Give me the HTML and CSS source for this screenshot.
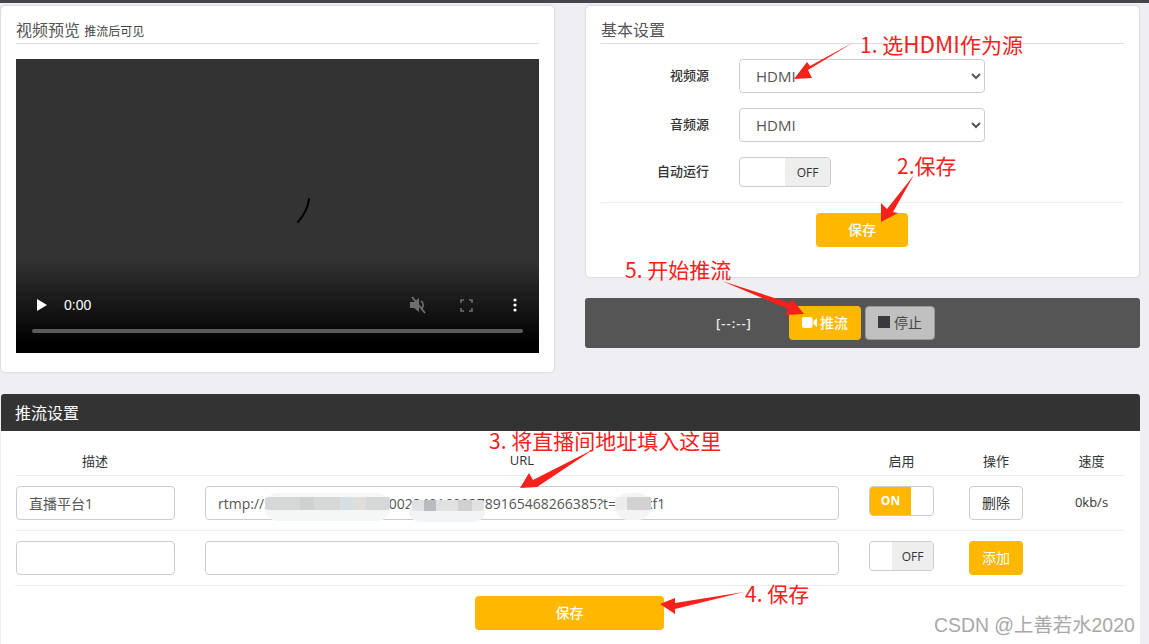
FILE: index.html
```html
<!DOCTYPE html>
<html lang="en">
  <head>
    <meta charset="UTF-8" />
    <meta name="viewport" content="width=device-width, initial-scale=1.0" />
    <title>推流设置</title>
    <link rel="stylesheet" href="styles.css">
  </head>
  <body>
    <div class="topbar"></div>

    <div class="columns">
      <section class="card preview">
        <h3 class="title">视频预览 <small>推流后可见</small></h3>
        <div class="video">
          <svg class="spinner" width="20" height="28" viewBox="0 0 20 28">
            <path d="M15 3 C14 12 10 19 4 26" fill="none" stroke="#000" stroke-width="2" stroke-linecap="round" />
          </svg>
          <div class="controls">
            <svg class="play" width="12" height="14" viewBox="0 0 12 14"><path d="M1 1 L11 7 L1 13 Z" fill="#fff" /></svg>
            <span class="time">0:00</span>
            <svg class="ctl-mute" width="18" height="18" viewBox="0 0 18 18">
              <path d="M1 6 H5 L10 2 V16 L5 12 H1 Z" fill="#6f6f6f" />
              <path d="M12 5 C15 7 15 11 12 13" fill="none" stroke="#6f6f6f" stroke-width="1.6" />
              <path d="M3 1 L16 17" stroke="#6f6f6f" stroke-width="1.8" />
            </svg>
            <svg class="ctl-full" width="13" height="13" viewBox="0 0 13 13">
              <path d="M1 4 V1 H4 M9 1 H12 V4 M12 9 V12 H9 M4 12 H1 V9" fill="none" stroke="#6f6f6f" stroke-width="1.6" />
            </svg>
            <svg class="ctl-more" width="4" height="14" viewBox="0 0 4 14">
              <circle cx="2" cy="2" r="1.6" fill="#fff" />
              <circle cx="2" cy="7" r="1.6" fill="#fff" />
              <circle cx="2" cy="12" r="1.6" fill="#fff" />
            </svg>
          </div>
          <div class="progress"></div>
        </div>
      </section>

      <div class="side">
        <section class="card basic">
          <h3 class="title">基本设置</h3>
          <div class="form-row">
            <label class="form-label">视频源</label>
            <select class="select"><option>HDMI</option></select>
          </div>
          <div class="form-row">
            <label class="form-label">音频源</label>
            <select class="select"><option>HDMI</option></select>
          </div>
          <div class="form-row form-row-switch">
            <label class="form-label">自动运行</label>
            <div class="switch switch-wide"><span class="switch-blank"></span><span class="switch-off">OFF</span></div>
          </div>
          <div class="form-actions">
            <button class="btn btn-save">保存</button>
          </div>
        </section>

        <div class="stream-bar">
          <span class="stream-time">[--:--]</span>
          <button class="btn btn-push">
            <svg width="15" height="11" viewBox="0 0 15 11"><rect x="0" y="0" width="10.5" height="11" rx="2" fill="#fff" /><path d="M11.5 4 L15 1 V10 L11.5 7 Z" fill="#fff" /></svg>
            推流
          </button>
          <button class="btn btn-stop"><i class="stop-icon"></i>停止</button>
        </div>
      </div>
    </div>

    <section class="panel">
      <h3 class="panel-head">推流设置</h3>
      <div class="panel-body">
        <div class="grid-row grid-head">
          <div class="cell-desc">描述</div>
          <div class="cell-url">URL</div>
          <div class="cell-on">启用</div>
          <div class="cell-op">操作</div>
          <div class="cell-speed">速度</div>
        </div>
        <div class="grid-row">
          <input class="input input-desc" type="text" value="直播平台1" />
          <input class="input input-url" type="text" value="rtmp://xxxxxxxxxxxxxxxxx00224916003789165468266385?t=xxxxxf1" />
          <div class="switch switch-on"><span class="switch-label">ON</span><span class="switch-blank"></span></div>
          <button class="btn btn-plain">删除</button>
          <div class="cell-speed cell-value">0kb/s</div>
        </div>
        <div class="grid-row">
          <input class="input input-desc" type="text" />
          <input class="input input-url" type="text" />
          <div class="switch switch-small"><span class="switch-blank"></span><span class="switch-off">OFF</span></div>
          <button class="btn btn-add">添加</button>
          <div class="cell-speed"></div>
        </div>
        <div class="panel-actions">
          <button class="btn btn-save-all">保存</button>
        </div>
      </div>
    </section>

    <!-- screenshot annotations on top of the page -->
    <svg class="notes" width="1149" height="644" viewBox="0 0 1149 644">
      <g class="smudge">
        <rect x="265" y="493" width="125" height="28" rx="13" fill="#f5f6f6" />
        <rect x="265" y="497" width="125" height="13" rx="3" fill="#d6d8d8" />
        <rect x="300" y="497" width="14" height="13" fill="#cfd1d0" />
        <rect x="340" y="497" width="14" height="13" fill="#d8dfe2" />
        <rect x="354" y="497" width="12" height="13" fill="#e0dedb" />
        <rect x="409" y="500" width="76" height="22" rx="11" fill="#f3f4f5" />
        <rect x="412" y="500" width="72" height="11" rx="3" fill="#dfe1e2" />
        <rect x="424" y="500" width="12" height="11" fill="#b9bcbf" />
        <rect x="458" y="500" width="14" height="11" fill="#d0d0d0" />
        <rect x="615" y="493" width="36" height="27" rx="13" fill="#f4f4f4" />
        <rect x="615" y="497" width="12" height="13" rx="3" fill="#ececec" />
        <rect x="627" y="497" width="24" height="13" fill="#d2d2d2" />
      </g>
      <g fill="#f5211a">
        <path d="M854 42 L808 70 L812 78 L794 79 L807 62 L810 66 Z" />
        <path d="M914 175 L893 212 L898 213 L881 222 L881 203 L887 209 Z" />
        <path d="M722 281 L790 303 L792 299 L804 314 L786 315 L788 309 Z" />
        <path d="M594 449 L537 487 L520 488 L529 473 L533 480 Z" />
        <path d="M744 592 L675 609 L675 614 L660 604 L675 598 L675 603 Z" />
      </g>
      <g class="note-text">
        <text x="860" y="53">1. 选<tspan class="note-latin">HDMI</tspan>作为源</text>
        <text x="897" y="174">2.保存</text>
        <text x="625" y="278">5. 开始推流</text>
        <text x="489" y="449">3. 将直播间地址填入这里</text>
        <text x="745" y="602">4. 保存</text>
      </g>
      <text class="watermark" x="934" y="632">CSDN @上善若水2020</text>
    </svg>
  </body>
</html>
```

FILE: styles.css
```css
* {
  box-sizing: border-box;
}
body {
  font-family: "Open Sans", "Noto Sans CJK SC", sans-serif;
  font-size: 13px;
  color: #333;
  background: #eeeef3;
  margin: 0;
  width: 1149px;
  height: 644px;
  overflow: hidden;
  position: relative;
}
.topbar {
  height: 3px;
  background: #45454b;
}
.columns {
  display: flex;
  align-items: flex-start;
  padding: 3px 9px 0 1px;
  gap: 31px;
}
.card {
  background: #fff;
  border-radius: 4px;
  box-shadow: 0 0 2px rgba(0, 0, 0, 0.25);
  padding: 15px;
}
.preview {
  width: 553px;
  height: 366px;
}
.side {
  width: 555px;
}
.basic {
  width: 553px;
  height: 271px;
  margin-left: 1px;
}
.title {
  margin: 0 0 15px;
  height: 23px;
  line-height: 19px;
  font-size: 16px;
  font-weight: 400;
  color: #555;
  border-bottom: 1px solid #ddd;
}
.title small {
  font-size: 12px;
  color: #444;
}
.video {
  position: relative;
  height: 294px;
  display: flex;
  flex-direction: column;
  justify-content: flex-end;
  background: linear-gradient(#333 0, #333 200px, #000 285px);
}
.spinner {
  position: absolute;
  left: 278px;
  top: 137px;
}
.controls {
  display: flex;
  align-items: center;
  height: 20px;
  padding: 0 22px 0 20px;
  margin-bottom: 14px;
  color: #fff;
  font-family: "Liberation Sans", sans-serif;
  font-size: 14px;
}
.time {
  margin-left: 16px;
  flex: 1;
}
.ctl-full {
  margin-left: 33px;
}
.ctl-more {
  margin-left: 40px;
}
.progress {
  height: 4px;
  margin: 0 16px 20px;
  border-radius: 2px;
  background: #5c5c5c;
}
.form-row {
  display: flex;
  align-items: center;
  height: 34px;
  margin-bottom: 15px;
}
.form-row-switch {
  height: 30px;
}
.form-label {
  width: 108px;
  margin-right: 30px;
  padding-bottom: 3px;
  text-align: right;
  font-size: 13px;
  font-weight: 500;
}
.select {
  width: 246px;
  height: 34px;
  padding: 0 12px;
  font-family: inherit;
  font-size: 15px;
  color: #555;
  background: #fff;
  border: 1px solid #ccc;
  border-radius: 4px;
}
.switch {
  display: flex;
  height: 30px;
  border: 1px solid #ccc;
  border-radius: 4px;
  overflow: hidden;
  font-size: 12px;
}
.switch-wide {
  width: 92px;
}
.switch-wide .switch-blank,
.switch-wide .switch-off {
  width: 50%;
}
.switch-small,
.switch-on {
  width: 65px;
}
.switch-blank {
  flex: 1;
}
.switch-off {
  width: 41px;
  line-height: 30px;
  text-align: center;
  background: #eee;
}
.switch-label {
  width: 41px;
  line-height: 28px;
  text-align: center;
  color: #fff;
  font-weight: 700;
  background: #ffb700;
}
.form-actions {
  margin-top: 15px;
  padding-top: 10px;
  border-top: 1px solid #eee;
  text-align: center;
}
.btn {
  height: 34px;
  padding: 0 0 2px;
  font-family: inherit;
  font-size: 14px;
  color: #fff;
  background: #ffb700;
  border: 0;
  border-radius: 4px;
  cursor: pointer;
}
.btn-save {
  width: 92px;
  margin-right: 1px;
  font-weight: 500;
}
.stream-bar {
  display: flex;
  align-items: center;
  height: 50px;
  margin-top: 21px;
  padding-left: 131px;
  background: #555;
  border-radius: 3px;
}
.stream-time {
  width: 73px;
  color: #eee;
  font-size: 13px;
  font-weight: 600;
  letter-spacing: 1px;
}
.btn-push {
  width: 72px;
  display: flex;
  align-items: center;
  justify-content: center;
  gap: 3px;
  font-weight: 500;
}
.btn-stop {
  width: 70px;
  margin-left: 4px;
  color: #444;
  background: #c0c0c0;
  border: 1px solid #999;
  display: flex;
  align-items: center;
  justify-content: center;
  gap: 4px;
}
.stop-icon {
  width: 12px;
  height: 12px;
  background: #3a3a3a;
}
.panel {
  width: 1139px;
  margin: 22px 0 0 1px;
  height: 250px;
  background: #fff;
}
.panel-head {
  margin: 0;
  height: 37px;
  line-height: 38px;
  padding-left: 14px;
  font-size: 16px;
  font-weight: 400;
  color: #fff;
  background: #333;
  border-radius: 3px 3px 0 0;
}
.panel-body {
  padding: 0 15px 0 14px;
}
.grid-row {
  display: grid;
  grid-template-columns: 190px 664px 100px 90px 65px;
  align-items: start;
  height: 55px;
  padding-top: 10px;
  border-bottom: 1px solid #eee;
}
.grid-head {
  height: 45px;
  padding-top: 20px;
  font-size: 13px;
  text-align: center;
}
.cell-desc {
  width: 160px;
}
.cell-url {
  width: 634px;
}
.cell-on {
  width: 65px;
}
.cell-op {
  width: 54px;
}
.cell-speed {
  font-size: 13px;
  text-align: center;
}
.cell-value {
  line-height: 32px;
}
.input {
  height: 34px;
  padding: 0 12px;
  font-family: inherit;
  font-size: 14px;
  color: #555;
  border: 1px solid #ccc;
  border-radius: 4px;
}
.input-desc {
  width: 159px;
  margin-left: 1px;
}
.input-url {
  width: 634px;
}
.btn-plain,
.btn-add {
  width: 54px;
}
.btn-plain {
  color: #333;
  background: #fff;
  border: 1px solid #ccc;
}
.panel-actions {
  padding-top: 10px;
  text-align: center;
}
.btn-save-all {
  width: 189px;
  margin-left: -1px;
  font-weight: 500;
}
.notes {
  position: absolute;
  left: 0;
  top: 0;
  pointer-events: none;
}
.note-text {
  font-family: "Noto Sans CJK SC", sans-serif;
  font-size: 21px;
  fill: #f5211a;
}
.note-latin {
  font-size: 22.5px;
}
.watermark {
  font-family: "Liberation Sans", "Noto Sans CJK SC", sans-serif;
  font-size: 19.4px;
  fill: #a8a8a8;
}
```
